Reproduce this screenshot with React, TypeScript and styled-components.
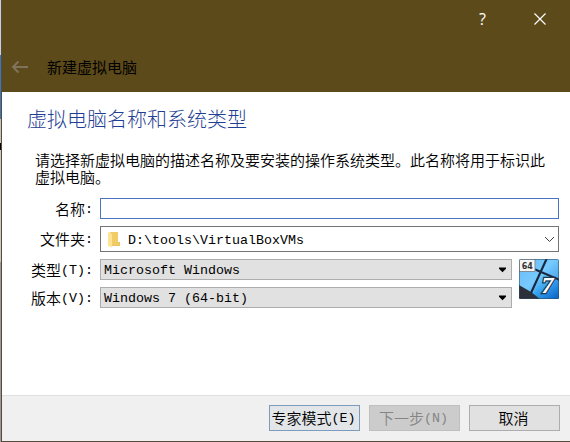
import React from "react";
import styled, { createGlobalStyle, css } from "styled-components";

const mono = `"Liberation Mono", "Noto Sans CJK SC", monospace`;
const sans = `"Noto Sans CJK SC", sans-serif`;

const GlobalStyle = createGlobalStyle`
  * { box-sizing: border-box; }
  html, body { margin: 0; overflow: hidden; }
`;

const Desktop = styled.div`
  width: 570px;
  height: 442px;
  padding-left: 1px;
  background: linear-gradient(
    #d2d0cc 0 55px, #3f78b4 55px 119px, #cbc3b6 119px 143px, #0c0505 143px 150px,
    #d0c8bc 150px 262px, #a29891 262px 100%
  );
`;

const Dialog = styled.main`
  height: 442px;
  display: flex;
  flex-direction: column;
  background: #fff;
  border-left: 1px solid #544b42;
  border-bottom: 1px solid #544b3d;
  color: #000;
  font: 400 13.33px/17px ${mono};
`;

const Header = styled.header`
  height: 92px;
  flex: none;
  background: #5d4a1a;
`;

const Controls = styled.div`
  height: 38px;
  padding-right: 23px;
  display: flex;
  justify-content: flex-end;
  align-items: center;
  gap: 46px;
  color: #fff;
`;

const Help = styled.span`
  width: 8px;
  font: 400 16px/20px "Open Sans", sans-serif;
`;

const TitleBar = styled.div`
  height: 54px;
  display: flex;
  align-items: center;
  padding: 0 0 0 9px;
  gap: 18px;
`;

const BackArrow = styled.svg`
  margin-top: 3px;
`;

const Title = styled.h1`
  margin: 3px 0 0;
  font: 400 15px/20px ${sans};
`;

const Body = styled.section`
  flex: 1;
  padding: 13px 10px 0 25px;
`;

const Heading = styled.h2`
  margin: 0;
  font: 300 20px/28px ${sans};
  color: #1f3e94;
`;

const Description = styled.p`
  margin: 18px 0 0 8px;
  width: 514px;
  font: 350 15px/17px ${sans};
`;

const Rows = styled.div`
  margin: 13px 0 0 1px;
  display: flex;
  flex-direction: column;
`;

const Row = styled.div`
  display: flex;
  margin-bottom: 7px;
`;

const Label = styled.label<{ $height?: number }>`
  width: 72px;
  flex: none;
  padding: 0 7px 1px 0;
  height: ${(p) => p.$height ?? 21}px;
  display: flex;
  justify-content: flex-end;
  align-items: center;
  white-space: nowrap;
`;

const Latin = styled.span`
  font: 400 13.33px/17px ${mono};
  padding-top: 2px;
`;

const Cjk = styled.span`
  font: 350 15px/17px ${sans};
`;

const field = css`
  display: flex;
  align-items: center;
  font: 400 13.33px/17px ${mono};
  color: #000;
`;

const NameInput = styled.input`
  width: 459px;
  height: 21px;
  padding: 0 3px;
  border: 1px solid #4a74bf;
  border-radius: 0;
  outline: none;
  background: #fff;
`;

const FolderBox = styled.div`
  ${field}
  width: 459px;
  height: 26px;
  padding: 0 3px 0 7px;
  border: 1px solid #747474;
  background: #fff;
`;

const FolderPath = styled.span`
  flex: 1;
  padding: 2px 0 0 7px;
`;

const Selects = styled.div`
  display: flex;
  gap: 7px;
`;

const SelectColumn = styled.div`
  display: flex;
  flex-direction: column;
`;

const Select = styled.div`
  ${field}
  justify-content: space-between;
  width: 412px;
  height: 21px;
  padding: 1px 4px 0 3px;
  border: 1px solid #adadad;
  background: #e1e1e1;
`;

const Footer = styled.footer`
  height: 46px;
  flex: none;
  display: flex;
  justify-content: flex-end;
  gap: 9px;
  padding: 9px 10px 0 0;
  border-top: 1px solid #dfdfdf;
  background: #f0f0f0;
`;

const tones = {
  primary: ["#e3e6e9", "#7d9cbd", "#000"],
  disabled: ["#cccccc", "#bfbfbf", "#858585"],
  normal: ["#e1e1e1", "#adadad", "#000"],
};

const Button = styled.button<{ $tone: keyof typeof tones }>`
  width: 91px;
  height: 26px;
  padding: 0 2px 1px 0;
  display: flex;
  justify-content: center;
  align-items: center;
  background: ${(p) => tones[p.$tone][0]};
  border: 1px solid ${(p) => tones[p.$tone][1]};
  color: ${(p) => tones[p.$tone][2]};
  white-space: nowrap;
`;

const Arrow = () => (
  <svg width="9" height="6" viewBox="0 0 9 6">
    <path d="M1 .5h7v1.2L4.5 5.2 1 1.7z" fill="#000" />
  </svg>
);

const FolderIcon = () => (
  <svg width="13" height="17" viewBox="0 0 13 17">
    <path d="M2 1h8v10h2v4H2z" fill="#f1cb66" />
    <path d="M10 11h2v4H4v-1h6z" fill="#eec45b" />
    <path d="M0 1l4 2v13.5L0 14.7z" fill="#ffe394" />
  </svg>
);

const GuestIcon = () => (
  <svg width="40" height="40" viewBox="0 0 40 40">
    <defs>
      <linearGradient id="sky" x1="0" y1="0" x2="1" y2="1">
        <stop offset="0" stopColor="#69b9f1" />
        <stop offset=".45" stopColor="#77cbff" />
        <stop offset="1" stopColor="#1f83dc" />
      </linearGradient>
      <linearGradient id="pane" x1="0" y1="0" x2=".8" y2="1">
        <stop offset="0" stopColor="#9ae2ff" />
        <stop offset=".55" stopColor="#39a5f2" />
        <stop offset="1" stopColor="#0f6bca" />
      </linearGradient>
      <clipPath id="tile"><rect width="40" height="40" rx="1.5" /></clipPath>
    </defs>
    <g clipPath="url(#tile)">
      <rect width="40" height="40" fill="url(#sky)" />
      <path d="M22 14L40 21V40H12z" fill="url(#pane)" />
      <path d="M0 26l12 7 9 7H0z" fill="#2b303b" />
      <path d="M28-1L12 34M15 10l26 11" stroke="#182b43" strokeWidth="2.2" fill="none" />
      <path d="M0 0h16v12.5H0z" fill="#f5f5f5" stroke="#858b91" />
      <text x="2.8" y="10" fontFamily="DejaVu Sans" fontWeight="700" fontSize="8" fill="#333">64</text>
      <text x="22.5" y="34" fontFamily="Liberation Serif" fontStyle="italic" fontWeight="700" fontSize="24" fill="#fff" stroke="#203752" strokeWidth="2.5" paintOrder="stroke">7</text>
      <rect x=".5" y=".5" width="39" height="39" rx="1" fill="none" stroke="#304b65" opacity=".55" />
    </g>
  </svg>
);

export default function App() {
  return (
    <>
      <GlobalStyle />
      <Desktop>
        <Dialog>
          <Header>
            <Controls>
              <Help>?</Help>
              <svg width="14" height="14" viewBox="0 0 14 14">
                <path d="M1.5 1.5l11 11m0-11l-11 11" stroke="#fff" strokeWidth="1.2" />
              </svg>
            </Controls>
            <TitleBar>
              <BackArrow width="18" height="14" viewBox="0 0 18 14">
                <path d="M7.5 1.5L2 7l5.500 5.500M2 7h15" fill="none" stroke="#80735c" strokeWidth="2" />
              </BackArrow>
              <Title>新建虚拟电脑</Title>
            </TitleBar>
          </Header>
          <Body>
            <Heading>虚拟电脑名称和系统类型</Heading>
            <Description>
              请选择新虚拟电脑的描述名称及要安装的操作系统类型。此名称将用于标识此虚拟电脑。
            </Description>
            <Rows>
              <Row>
                <Label htmlFor="name"><Cjk>名称</Cjk><Latin>:</Latin></Label>
                <NameInput id="name" />
              </Row>
              <Row>
                <Label as="span" $height={26}><Cjk>文件夹</Cjk><Latin>:</Latin></Label>
                <FolderBox>
                  <FolderIcon />
                  <FolderPath>D:\tools\VirtualBoxVMs</FolderPath>
                  <svg width="11" height="7" viewBox="0 0 11 7">
                    <path d="M1 1l4.5 4.5L10 1" fill="none" stroke="#404040" />
                  </svg>
                </FolderBox>
              </Row>
              <Selects>
                <SelectColumn>
                  <Row>
                    <Label as="span"><Cjk>类型</Cjk><Latin>(T):</Latin></Label>
                    <Select>Microsoft Windows<Arrow /></Select>
                  </Row>
                  <Row>
                    <Label as="span"><Cjk>版本</Cjk><Latin>(V):</Latin></Label>
                    <Select>Windows 7 (64-bit)<Arrow /></Select>
                  </Row>
                </SelectColumn>
                <GuestIcon />
              </Selects>
            </Rows>
          </Body>
          <Footer>
            <Button $tone="primary"><Cjk>专家模式</Cjk><Latin>(E)</Latin></Button>
            <Button $tone="disabled" disabled><Cjk>下一步</Cjk><Latin>(N)</Latin></Button>
            <Button $tone="normal"><Cjk>取消</Cjk></Button>
          </Footer>
        </Dialog>
      </Desktop>
    </>
  );
}
